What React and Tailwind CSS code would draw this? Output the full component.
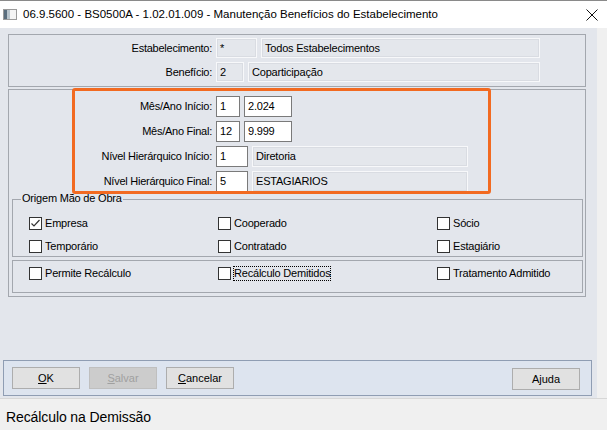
import React from "react";

const FONT = { fontFamily: '"Liberation Sans", Arial, sans-serif' };

function Box({ w, value, readOnly = false }) {
  return (
    <div
      className={`${w} h-full flex items-center px-[3px] text-[11px] tracking-[-0.2px] text-black ${
        readOnly
          ? "bg-[#e4e7ec] border border-[#f7f8fa] shadow-[inset_0_0_0_1px_#d9dce2]"
          : "bg-white border border-[#7a7a7a]"
      }`}
    >
      {value}
    </div>
  );
}

function Row({ label, children, h = "h-[20px]" }) {
  return (
    <div className={`flex ${h}`}>
      <div className="w-[206px] shrink-0 flex items-center justify-end pr-[3px] text-[11px] tracking-[-0.25px] text-black">
        {label}
      </div>
      <div className="flex gap-[4px] h-full ml-[1px]">{children}</div>
    </div>
  );
}

function Check({ label, checked = false, focus = false }) {
  return (
    <div className="flex items-center h-[13px] gap-[3px]">
      <div className="w-[13px] h-[13px] border border-[#333] bg-white flex items-center justify-center shrink-0">
        {checked && (
          <svg width="11" height="11" viewBox="0 0 11 11">
            <path d="M1.5 5.5 L4 8 L9.5 2" fill="none" stroke="#333" strokeWidth="1.2" />
          </svg>
        )}
      </div>
      <span
        className={`text-[11px] tracking-[-0.2px] text-black leading-[13px] ${
          focus ? "outline outline-1 outline-dotted outline-black" : ""
        }`}
      >
        {label}
      </span>
    </div>
  );
}

function Btn({ children, disabled = false }) {
  return (
    <button
      className={`w-[68px] h-[22px] text-[11px] border ${
        disabled
          ? "bg-[#cccccc] border-[#bfbfbf] text-[#a0a0a0]"
          : "bg-[#e1e1e1] border-[#adadad] text-black"
      }`}
    >
      {children}
    </button>
  );
}

export default function App() {
  return (
    <div className="w-[607px] h-[430px] bg-[#f0f0f0] flex flex-col overflow-hidden" style={FONT}>
      {/* title bar */}
      <div className="h-[28px] bg-white border-t border-[#8a8a8a] flex items-center shrink-0">
        <svg width="14" height="11" viewBox="0 0 14 11" className="ml-[3px]">
          <rect x="0.5" y="0.5" width="13" height="10" fill="#f4f4f4" stroke="#9a9a9a" />
          <rect x="1" y="1" width="3" height="9" fill="#5a6e7e" />
          <rect x="4" y="1" width="3" height="9" fill="#b8c4cc" />
        </svg>
        <span className="ml-[6px] text-[11.5px] text-black">
          06.9.5600 - BS0500A - 1.02.01.009 - Manutenção Benefícios do Estabelecimento
        </span>
        <svg width="12" height="12" viewBox="0 0 12 12" className="ml-auto mr-[9px]">
          <path d="M0.5 0.5 L11.5 11.5 M11.5 0.5 L0.5 11.5" stroke="#111" strokeWidth="1" />
        </svg>
      </div>

      {/* window body */}
      <div className="w-[597px] h-[370px] bg-[#e3e6ec] flex flex-col shrink-0">
        {/* panel 1 */}
        <div className="ml-[8px] mt-[6px] w-[578px] h-[53px] border border-[#a3a7ae] flex flex-col pt-[3px] gap-[4px]">
          <Row label="Estabelecimento:">
            <Box w="w-[41px]" value="*" readOnly />
            <Box w="w-[279px]" value="Todos Estabelecimentos" readOnly />
          </Row>
          <Row label="Benefício:">
            <Box w="w-[28px]" value="2" readOnly />
            <Box w="w-[292px]" value="Coparticipação" readOnly />
          </Row>
        </div>

        {/* panel 2 */}
        <div className="relative ml-[8px] mt-[2px] w-[578px] h-[208px] border border-[#a3a7ae] flex flex-col">
          <div className="flex flex-col gap-[4px] pt-[6px]">
            <Row label="Mês/Ano Início:" h="h-[21px]">
              <Box w="w-[24px]" value="1" />
              <Box w="w-[48px]" value="2.024" />
            </Row>
            <Row label="Mês/Ano Final:" h="h-[21px]">
              <Box w="w-[24px]" value="12" />
              <Box w="w-[48px]" value="9.999" />
            </Row>
            <Row label="Nível Hierárquico Início:" h="h-[21px]">
              <Box w="w-[32px]" value="1" />
              <Box w="w-[216px]" value="Diretoria" readOnly />
            </Row>
            <Row label="Nível Hierárquico Final:" h="h-[21px]">
              <Box w="w-[32px]" value="5" />
              <Box w="w-[216px]" value="ESTAGIARIOS" readOnly />
            </Row>
          </div>

          {/* Origem Mão de Obra */}
          <div className="relative ml-[3px] mt-[7px] w-[571px] h-[58px] border border-[#a3a7ae] pl-[16px] pt-[17px]">
            <span className="absolute left-[8px] top-[-8px] px-[1px] bg-[#e3e6ec] text-[11px] tracking-[-0.2px] leading-[13px] text-black">
              Origem Mão de Obra
            </span>
            <div className="grid grid-cols-[189px_219px_1fr] gap-y-[10px]">
              <Check label="Empresa" checked />
              <Check label="Cooperado" />
              <Check label="Sócio" />
              <Check label="Temporário" />
              <Check label="Contratado" />
              <Check label="Estagiário" />
            </div>
          </div>

          <div className="ml-[3px] mt-[3px] w-[571px] h-[33px] border border-[#a3a7ae] pl-[16px] pt-[6px]">
            <div className="grid grid-cols-[189px_219px_1fr]">
              <Check label="Permite Recálculo" />
              <Check label="Recálculo Demitidos" focus />
              <Check label="Tratamento Admitido" />
            </div>
          </div>

          {/* highlight annotation */}
          <div className="absolute left-[63px] top-[-2px] w-[419px] h-[106px] border-[3px] border-[#f26a21] rounded-[3px] pointer-events-none" />
        </div>

        {/* button bar */}
        <div className="mt-auto mb-[2px] ml-[3px] w-[589px] h-[36px] bg-[#dde4ef] border border-[#8f9db3] flex items-center pl-[8px] pr-[11px] gap-[9px]">
          <Btn>
            <u>O</u>K
          </Btn>
          <Btn disabled>
            <u>S</u>alvar
          </Btn>
          <Btn>
            <u>C</u>ancelar
          </Btn>
          <div className="ml-auto">
            <Btn>
              A<u>j</u>uda
            </Btn>
          </div>
        </div>
      </div>

      {/* status bar */}
      <div className="flex-1 border-t border-[#d7d7d7] flex items-center pl-[6px] pt-[6px] text-[14px] tracking-[-0.1px] text-black">
        Recálculo na Demissão
      </div>
    </div>
  );
}
